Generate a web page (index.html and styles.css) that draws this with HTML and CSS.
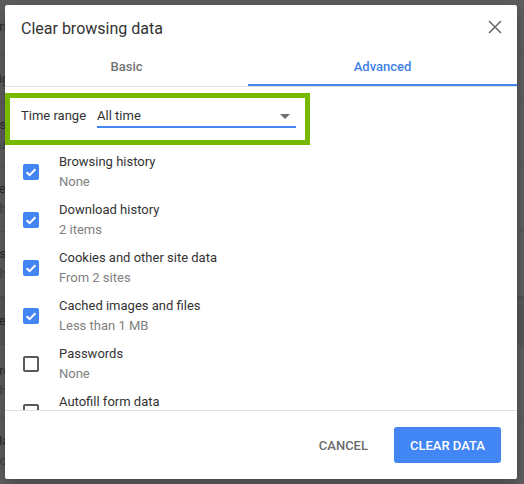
FILE: index.html
```html
<!DOCTYPE html>
<html lang="en">
<head>
<meta charset="utf-8">
<title>Clear browsing data</title>
<link rel="stylesheet" href="styles.css">
</head>
<body>
<div class="page">
  <div class="prow h55"><span class="pt">Print</span></div>
  <div class="prow h48"><span class="pt">Sign in</span></div>
  <div class="prow h64"><span class="pt">Use a</span><span class="pt sub">Turn on</span></div>
  <div class="prow h65"><span class="pt">Set as</span><span class="pt sub">Chrome may</span></div>
  <div class="prow h65"><span class="pt">Use a service</span><span class="pt sub">Chrome uses</span></div>
  <div class="prow h48 dark"><span class="pt">Send</span></div>
  <div class="prow h73"><span class="pt">Protect</span><span class="pt sub">Chrome</span></div>
  <div class="prow last"><span class="pt">Manage</span><span class="pt sub">Control</span></div>
</div>

<div class="dialog" role="dialog" aria-label="Clear browsing data">
  <div class="dlg-head">
    <h1 class="dlg-title">Clear browsing data</h1>
    <button class="close" aria-label="Close">
      <svg width="14" height="14" viewBox="0 0 14 14"><path d="M1 1 L13 13 M13 1 L1 13" stroke="#6b6b6b" stroke-width="1.6" fill="none"/></svg>
    </button>
  </div>
  <div class="tabs">
    <div class="tab tab-basic">Basic</div>
    <div class="tab tab-active">Advanced</div>
  </div>
  <div class="dlg-body">
    <div class="range">
      <span class="range-label">Time range</span>
      <div class="select">
        <span>All time</span>
        <svg class="arrow" width="10" height="5" viewBox="0 0 10 5"><path d="M0 0 L10 0 L5 5 Z" fill="#6e6e6e"/></svg>
      </div>
    </div>
    <div class="list">
      <div class="item">
        <span class="cb on"><svg width="16" height="16" viewBox="0 0 16 16"><path d="M3.6 8.3 L6.6 11.1 L12.4 5.2" stroke="#fff" stroke-width="2" fill="none"/></svg></span>
        <div class="txt"><div class="lbl">Browsing history</div><div class="sub">None</div></div>
      </div>
      <div class="item">
        <span class="cb on"><svg width="16" height="16" viewBox="0 0 16 16"><path d="M3.6 8.3 L6.6 11.1 L12.4 5.2" stroke="#fff" stroke-width="2" fill="none"/></svg></span>
        <div class="txt"><div class="lbl">Download history</div><div class="sub">2 items</div></div>
      </div>
      <div class="item">
        <span class="cb on"><svg width="16" height="16" viewBox="0 0 16 16"><path d="M3.6 8.3 L6.6 11.1 L12.4 5.2" stroke="#fff" stroke-width="2" fill="none"/></svg></span>
        <div class="txt"><div class="lbl">Cookies and other site data</div><div class="sub">From 2 sites</div></div>
      </div>
      <div class="item">
        <span class="cb on"><svg width="16" height="16" viewBox="0 0 16 16"><path d="M3.6 8.3 L6.6 11.1 L12.4 5.2" stroke="#fff" stroke-width="2" fill="none"/></svg></span>
        <div class="txt"><div class="lbl">Cached images and files</div><div class="sub">Less than 1 MB</div></div>
      </div>
      <div class="item">
        <span class="cb"></span>
        <div class="txt"><div class="lbl">Passwords</div><div class="sub">None</div></div>
      </div>
      <div class="item">
        <span class="cb"></span>
        <div class="txt"><div class="lbl">Autofill form data</div><div class="sub">None</div></div>
      </div>
    </div>
  </div>
  <div class="dlg-foot">
    <button class="btn cancel">CANCEL</button>
    <button class="btn primary">CLEAR DATA</button>
  </div>
</div>
</body>
</html>
```

FILE: styles.css
```css
html, body {
  margin: 0;
  padding: 0;
}
body {
  width: 524px;
  height: 484px;
  overflow: hidden;
  position: relative;
  background: #5f5f5f;
  font-family: Roboto, "Liberation Sans", sans-serif;
}

/* dimmed page behind the dialog */
.page {
  display: flex;
  flex-direction: column;
}
.prow {
  display: flex;
  flex-direction: column;
  justify-content: center;
  gap: 4px;
  border-bottom: 1px solid #555555;
  box-sizing: border-box;
  padding-left: 0;
}
.prow.h55 { height: 55px; }
.prow.h48 { height: 48px; }
.prow.h64 { height: 64px; }
.prow.h65 { height: 65px; }
.prow.h73 { height: 73px; }
.prow.last { height: 66px; border-bottom: 0; }
.prow.dark { background: #595959; border-top: 1px solid #4e4e4e; }
.pt {
  font-size: 13px;
  line-height: 16px;
  color: #2a2a2a;
  margin-left: -9px;
  white-space: nowrap;
}
.pt.sub { color: #454545; }

/* dialog */
.dialog {
  position: absolute;
  left: 5px;
  top: 5px;
  width: 512px;
  height: 474px;
  background: #ffffff;
  border-radius: 2px;
  box-shadow: 0 4px 16px rgba(0,0,0,0.3);
  display: flex;
  flex-direction: column;
  overflow: hidden;
}
.dlg-head {
  height: 44px;
  box-sizing: border-box;
  padding: 14px 15px 0 16px;
  display: flex;
  justify-content: space-between;
  align-items: flex-start;
}
.dlg-title {
  margin: 0;
  font-size: 16px;
  font-weight: 400;
  line-height: 20px;
  color: #333333;
}
.close {
  border: 0;
  background: none;
  padding: 0;
  margin-top: 1px;
  width: 14px;
  height: 14px;
  display: block;
}
.close svg { display: block; }

.tabs {
  display: flex;
  border-bottom: 1px solid #e0e0e0;
}
.tab {
  height: 35px;
  line-height: 35px;
  border-bottom: 2px solid transparent;
  text-align: center;
  font-size: 13px;
  font-weight: 500;
  color: #737373;
}
.tab-basic { width: 243px; }
.tab-active {
  flex: 1;
  color: #3f7fe8;
  border-bottom-color: #4285f4;
}

.dlg-body {
  flex: 1;
  overflow: hidden;
}
.range {
  margin-top: 6px;
  width: 305px;
  height: 52px;
  box-sizing: border-box;
  border: 5px solid #76b900;
  padding: 8px 9px 0 11px;
  display: flex;
  align-items: flex-start;
  gap: 11px;
}
.range-label {
  font-size: 13px;
  line-height: 20px;
  color: #333333;
}
.select {
  flex: 1;
  height: 20px;
  line-height: 20px;
  font-size: 13px;
  color: #333333;
  border-bottom: 2px solid #4285f4;
  display: flex;
  justify-content: space-between;
  align-items: center;
  padding-right: 6px;
}
.arrow { display: block; margin-top: 1px; }

.list {
  margin-top: 3px;
}
.item {
  height: 48px;
  box-sizing: border-box;
  padding: 4px 0 4px 18px;
  display: flex;
  align-items: center;
  gap: 20px;
}
.cb {
  width: 16px;
  height: 16px;
  box-sizing: border-box;
  border: 2px solid #5a5a5a;
  border-radius: 2px;
  flex: none;
  display: block;
}
.cb.on {
  border: 0;
  background: #4285f4;
}
.cb svg { display: block; }
.txt {
  font-size: 13px;
  line-height: 20px;
}
.lbl { color: #333333; }
.sub { color: #808080; }

.dlg-foot {
  border-top: 1px solid #e0e0e0;
  height: 69px;
  box-sizing: border-box;
  padding: 0 16px;
  display: flex;
  justify-content: flex-end;
  align-items: center;
}
.btn {
  height: 36px;
  padding: 0 16px;
  border: 0;
  border-radius: 3px;
  font-family: Roboto, "Liberation Sans", sans-serif;
  font-size: 13px;
  font-weight: 500;
  letter-spacing: 0;
}
.cancel {
  background: none;
  color: #6b6b6b;
  margin-right: 10px;
}
.primary {
  background: #4285f4;
  color: #ffffff;
}
```
